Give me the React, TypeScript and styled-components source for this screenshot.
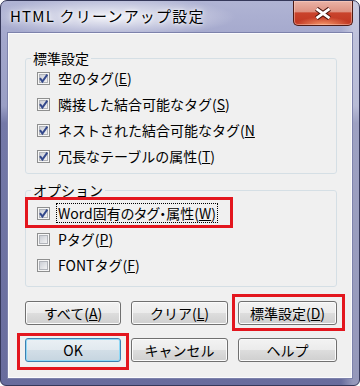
import React, { useId } from "react";
import styled, { createGlobalStyle } from "styled-components";

type Mark = { x: number; y: number; w: number; h: number };

const markCss = (m?: Mark) =>
  m
    ? `
  &::after {
    content: "";
    position: absolute;
    left: ${m.x}px;
    top: ${m.y}px;
    width: ${m.w}px;
    height: ${m.h}px;
    box-sizing: border-box;
    border: 3px solid #e3161e;
    pointer-events: none;
  }`
    : "";

const GlobalStyle = createGlobalStyle`
  html, body { margin: 0; padding: 0; background: #ffffff; }
  body {
    font-family: "Noto Sans CJK JP", "Noto Sans", sans-serif;
    color: #000;
  }
  #root { width: 360px; height: 386px; }
`;

const Window = styled.div`
  box-sizing: border-box;
  width: 360px;
  height: 386px;
  display: flex;
  flex-direction: column;
  border: 1px solid #35385a;
  border-radius: 7px 7px 6px 6px;
  overflow: hidden;
  background:
    radial-gradient(ellipse 125px 20px at 110px 16px, rgba(255, 255, 255, 0.85), rgba(255, 255, 255, 0) 100%),
    linear-gradient(90deg, rgba(255, 255, 255, 0) 0, rgba(255, 255, 255, 0) 340px, rgba(255, 255, 255, 0.3) 352px, rgba(255, 255, 255, 0.3) 360px),
    linear-gradient(180deg, #b0b4d4 0px, #a3a7cc 40px, #9a9fc5 105px, #7479a8 122px, #686c9d 100%);
`;

const TitleBar = styled.div`
  height: 32px;
  flex: none;
  display: flex;
  align-items: flex-start;
  padding-left: 9px;
`;

const Title = styled.span`
  margin-top: 5px;
  font-size: 15px;
  line-height: 20px;
  letter-spacing: 1.2px;
  color: #000;
  text-shadow: 0 0 6px rgba(255, 255, 255, 0.95), 0 0 3px rgba(255, 255, 255, 0.9);
  white-space: nowrap;
`;

const CloseButton = styled.div`
  margin-left: auto;
  margin-right: 6px;
  width: 60px;
  height: 25px;
  box-sizing: border-box;
  display: flex;
  align-items: center;
  justify-content: center;
  padding-top: 1px;
  border: 1px solid #4d1a14;
  border-top: none;
  border-radius: 0 0 5px 5px;
  background:
    radial-gradient(ellipse 28px 8px at 50% 100%, rgba(255, 170, 120, 0.85), rgba(255, 170, 120, 0) 100%),
    linear-gradient(180deg, #eab3a7 0%, #de9282 44%, #c9432c 50%, #c03520 100%);
  box-shadow: inset 0 0 0 1px rgba(255, 215, 205, 0.45);
`;

const Client = styled.div`
  flex: 1;
  margin: 0 7px 7px 7px;
  border: 1px solid #fbfbfd;
  box-shadow: 0 0 0 1px #7d82ab;
  background: #f0f0f0;
  padding: 18px 0 0 16px;
  display: flex;
  flex-direction: column;
`;

const Group = styled.fieldset<{ $gap: number }>`
  box-sizing: border-box;
  width: 312px;
  min-width: 0;
  margin: ${(p) => p.$gap}px 0 0 0;
  padding: 0;
  border: 1px solid #d5dfe5;
  border-radius: 3px;
`;

const Legend = styled.legend`
  margin-left: 5px;
  padding: 0 2px;
  font-size: 14px;
  line-height: 12px;
`;

const Rows = styled.div<{ $top: number; $bottom: number }>`
  padding: ${(p) => p.$top}px 0 ${(p) => p.$bottom}px 0;
  display: flex;
  flex-direction: column;
`;

const Row = styled.div<{ $h: number; $mark?: Mark }>`
  position: relative;
  display: flex;
  align-items: center;
  height: ${(p) => p.$h}px;
  padding-left: 11px;
  gap: 6px;
  ${(p) => markCss(p.$mark)}
`;

const Label = styled.span<{ $focused?: boolean; $narrow?: boolean }>`
  font-size: 14px;
  line-height: 18px;
  padding: 0 1px;
  white-space: nowrap;
  border: 1px ${(p) => (p.$focused ? "dotted #000" : "solid transparent")};
  font-feature-settings: ${(p) => (p.$narrow ? '"palt"' : "normal")};
`;

const ButtonRow = styled.div<{ $top: number }>`
  display: flex;
  gap: 10px;
  margin-top: ${(p) => p.$top}px;
`;

const Button = styled.button<{ $w: number; $default?: boolean; $mark?: Mark }>`
  position: relative;
  box-sizing: border-box;
  width: ${(p) => p.$w}px;
  height: 24px;
  padding: 0;
  font-family: inherit;
  font-size: 14px;
  line-height: 20px;
  color: #000;
  border-radius: 3px;
  border: 1px solid ${(p) => (p.$default ? "#3c7fb1" : "#707070")};
  background: ${(p) =>
    p.$default
      ? "linear-gradient(180deg, #eaf0f4 0%, #e1e9ef 50%, #d2dee7 51%, #c6d5e0 100%)"
      : "linear-gradient(180deg, #f3f3f3 0%, #ebebeb 50%, #dddddd 51%, #cfcfcf 100%)"};
  box-shadow: inset 0 0 0 1px ${(p) => (p.$default ? "#8fd8f6" : "#fbfbfb")};
  ${(p) => markCss(p.$mark)}
`;

const BoxSvg = styled.svg`
  flex: none;
  display: block;
`;

const CloseSvg = styled.svg`
  display: block;
`;

function CheckBox({ checked }: { checked: boolean }) {
  const id = useId().replace(/:/g, "");
  return (
    <BoxSvg width="13" height="13" viewBox="0 0 13 13">
      <defs>
        <linearGradient id={`g${id}`} x1="0" y1="0" x2="1" y2="1">
          <stop offset="0" stopColor="#c9ccd3" />
          <stop offset="1" stopColor="#f4f4f5" />
        </linearGradient>
      </defs>
      <rect x="0.5" y="0.5" width="12" height="12" fill="#f6f6f6" stroke="#8e8f8f" />
      <rect x="2.5" y="2.5" width="8" height="8" fill={`url(#g${id})`} stroke="#b1b4ba" />
      {checked && (
        <path d="M3 6.2 L5.4 9.6 L10.3 2.6" fill="none" stroke="#34498c" strokeWidth="2" />
      )}
    </BoxSvg>
  );
}

type Item = { pre: string; key: string; post: string; checked: boolean };

const Text = ({ item }: { item: { pre: string; key: string; post: string } }) => (
  <>
    {item.pre}
    <u>{item.key}</u>
    {item.post}
  </>
);

const standard: Item[] = [
  { pre: "空のタグ(", key: "E", post: ")", checked: true },
  { pre: "隣接した結合可能なタグ(", key: "S", post: ")", checked: true },
  { pre: "ネストされた結合可能なタグ(", key: "N", post: "", checked: true },
  { pre: "冗長なテーブルの属性(", key: "T", post: ")", checked: true },
];

const options: Item[] = [
  { pre: "Word固有のタグ・属性(", key: "W", post: ")", checked: true },
  { pre: "Pタグ(", key: "P", post: ")", checked: false },
  { pre: "FONTタグ(", key: "F", post: ")", checked: false },
];

export default function App() {
  return (
    <>
      <GlobalStyle />
      <Window>
        <TitleBar>
          <Title>HTML クリーンアップ設定</Title>
          <CloseButton>
            <CloseSvg width="18" height="13" viewBox="0 0 18 13">
              <path d="M2.5 1.8 L15.5 11.2 M15.5 1.8 L2.5 11.2" stroke="#4a120a" strokeWidth="4.8" />
              <path d="M2.5 1.8 L15.5 11.2 M15.5 1.8 L2.5 11.2" stroke="#ffffff" strokeWidth="2.8" />
            </CloseSvg>
          </CloseButton>
        </TitleBar>
        <Client>
          <Group $gap={0}>
            <Legend>標準設定</Legend>
            <Rows $top={1} $bottom={4}>
              {standard.map((it) => (
                <Row key={it.pre} $h={26}>
                  <CheckBox checked={it.checked} />
                  <Label>
                    <Text item={it} />
                  </Label>
                </Row>
              ))}
            </Rows>
          </Group>
          <Group $gap={10}>
            <Legend>オプション</Legend>
            <Rows $top={4} $bottom={8}>
              {options.map((it, i) => (
                <Row
                  key={it.pre}
                  $h={26}
                  $mark={i === 0 ? { x: -1, y: -3, w: 208, h: 31 } : undefined}
                >
                  <CheckBox checked={it.checked} />
                  <Label $focused={i === 0} $narrow={i === 0}>
                    <Text item={it} />
                  </Label>
                </Row>
              ))}
            </Rows>
          </Group>
          <ButtonRow $top={14}>
            <Button $w={96}>
              すべて(<u>A</u>)
            </Button>
            <Button $w={97}>
              クリア(<u>L</u>)
            </Button>
            <Button $w={99} $mark={{ x: -7, y: -8, w: 113, h: 37 }}>
              標準設定(<u>D</u>)
            </Button>
          </ButtonRow>
          <ButtonRow $top={13}>
            <Button $w={96} $default $mark={{ x: -9, y: -6, w: 112, h: 37 }}>
              OK
            </Button>
            <Button $w={97}>キャンセル</Button>
            <Button $w={99}>ヘルプ</Button>
          </ButtonRow>
        </Client>
      </Window>
    </>
  );
}
